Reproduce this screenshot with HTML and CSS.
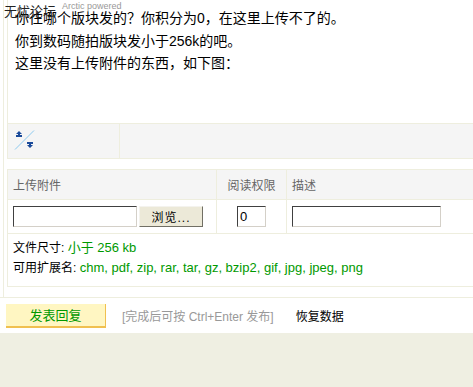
FILE: index.html
```html
<!DOCTYPE html>
<html lang="zh-CN">
<head>
    <meta charset="UTF-8">
    <title>发表回复</title>
    <link rel="stylesheet" href="styles.css">
</head>
<body>
    <div class="post">
        <div class="frame">
            <div class="editor">
                <p>你往哪个版块发的？你积分为0，在这里上传不了的。</p>
                <p>你到数码随拍版块发小于256k的吧。</p>
                <p>这里没有上传附件的东西，如下图：</p>
            </div>
            <div class="toolbar">
                <div class="tool-cell">
                    <svg width="22" height="22" viewBox="0 0 22 22">
                        <line x1="1" y1="20.5" x2="20" y2="1.5" stroke="#8ccaf0" stroke-width="1"/>
                        <path d="M2 5 L5 2 L8 5 Z M2 6 H8 V8 H2 Z M4 5 H6 V6 H4 Z" fill="#1a4a9a"/>
                        <path d="M13 13 H19 V15 H13 Z M15 15 H17 V16 H15 Z M13 16 H19 L16 19 Z" fill="#1a4a9a"/>
                    </svg>
                </div>
                <div class="tool-rest"></div>
            </div>
            <table class="attach">
                <tr class="head">
                    <td class="col-file">上传附件</td>
                    <td class="col-perm">阅读权限</td>
                    <td class="col-desc">描述</td>
                </tr>
                <tr class="fields">
                    <td class="col-file">
                        <input class="file-box" type="text"><button class="browse">浏览...</button>
                    </td>
                    <td class="col-perm"><input class="perm-box" type="text" value="0"></td>
                    <td class="col-desc"><input class="desc-box" type="text"></td>
                </tr>
                <tr class="info">
                    <td colspan="3">
                        <div>文件尺寸: <span class="green">小于 256 kb</span></div>
                        <div>可用扩展名: <span class="green">chm, pdf, zip, rar, tar, gz, bzip2, gif, jpg, jpeg, png</span></div>
                    </td>
                </tr>
            </table>
        </div>
    </div>

    <div class="actions">
        <button class="submit">发表回复</button>
        <span class="hint">[完成后可按 Ctrl+Enter 发布]</span>
        <span class="restore">恢复数据</span>
    </div>

    <div class="overlay">
        <span class="ghost-title">无忧论坛</span><span class="ghost-sub">Arctic powered</span>
    </div>
</body>
</html>
```

FILE: styles.css
```css
html, body {
    margin: 0;
    padding: 0;
}

body {
    width: 473px;
    height: 387px;
    overflow: hidden;
    background: #efefe2;
    font-family: "Liberation Sans", "Noto Sans CJK SC", sans-serif;
    font-size: 12px;
    color: #000;
    position: relative;
}

.post {
    background: #fff;
    height: 297px;
    border-bottom: 1px solid #eeeede;
}

.frame {
    margin-left: 3px;
    border-left: 1px solid #eeeede;
    padding-left: 3px;
    height: 297px;
}

.editor {
    height: 123px;
    border-left: 1px solid #eeeede;
    padding: 7px 0 0 7px;
    box-sizing: border-box;
    font-size: 14px;
    line-height: 22.5px;
}

.editor p {
    margin: 0;
}

.toolbar {
    display: flex;
    height: 34px;
    background: #f5f5f5;
    border-top: 1px solid #eeeede;
    border-bottom: 1px solid #eeeede;
    border-left: 1px solid #eeeede;
}

.tool-cell {
    width: 112px;
    border-right: 1px solid #eeeede;
    padding: 5px 0 0 6px;
    box-sizing: border-box;
}

.tool-rest {
    flex: 1;
}

.attach {
    margin-top: 10px;
    border-collapse: collapse;
    width: 100%;
    font-size: 12px;
}

.attach td {
    border: 1px solid #eeeede;
    padding: 0 0 0 5px;
}

.attach td.col-desc,
.info td {
    border-right: none;
}

.head td {
    height: 29px;
    background: #f5f5f5;
    color: #666;
}

.col-file {
    width: 203px;
}

.col-perm {
    width: 69px;
}

.head .col-perm {
    text-align: center;
    padding: 0;
}

.fields td {
    height: 33px;
}

.fields .col-perm {
    text-align: center;
    padding: 0;
}

.file-box,
.perm-box,
.desc-box {
    height: 21px;
    box-sizing: border-box;
    margin: 0;
    padding: 0 2px;
    border: 1px solid;
    border-color: #404040 #d4d0c8 #d4d0c8 #404040;
    font-family: "Liberation Sans", sans-serif;
    font-size: 12px;
    vertical-align: middle;
    background: #fff;
}

.file-box {
    width: 124px;
}

.perm-box {
    width: 29px;
    font-size: 13px;
}

.desc-box {
    width: 149px;
}

.browse {
    width: 64px;
    height: 21px;
    margin: 0 0 0 2px;
    padding: 0;
    background: #ece9d8;
    border: 1px solid;
    border-color: #f4f3ee #716f64 #716f64 #f4f3ee;
    font-family: "Liberation Sans", "Noto Sans CJK SC", sans-serif;
    font-size: 12px;
    letter-spacing: 1px;
    vertical-align: middle;
}

.info td {
    height: 48px;
    padding: 4px 0 0 5px;
    vertical-align: top;
    line-height: 20px;
}

.green {
    color: #009900;
    font-size: 13px;
}

.actions {
    height: 35px;
    background: #fff;
    display: flex;
    align-items: center;
    padding-left: 6px;
}

.submit {
    width: 100px;
    height: 24px;
    margin: 0;
    padding: 0;
    background: #fff6c2;
    border: none;
    border-right: 1px solid #f0c050;
    border-bottom: 2px solid #f0c050;
    color: #009900;
    font-family: "Liberation Sans", "Noto Sans CJK SC", sans-serif;
    font-size: 13px;
}

.hint {
    margin-left: 16px;
    color: #999;
    font-size: 12px;
}

.restore {
    margin-left: 22px;
    font-size: 12px;
}

.overlay {
    position: absolute;
    top: 1px;
    left: 4px;
    pointer-events: none;
}

.ghost-title {
    font-size: 13px;
    color: #222;
}

.ghost-sub {
    margin-left: 6px;
    font-size: 9px;
    color: #999;
    vertical-align: top;
}
```
